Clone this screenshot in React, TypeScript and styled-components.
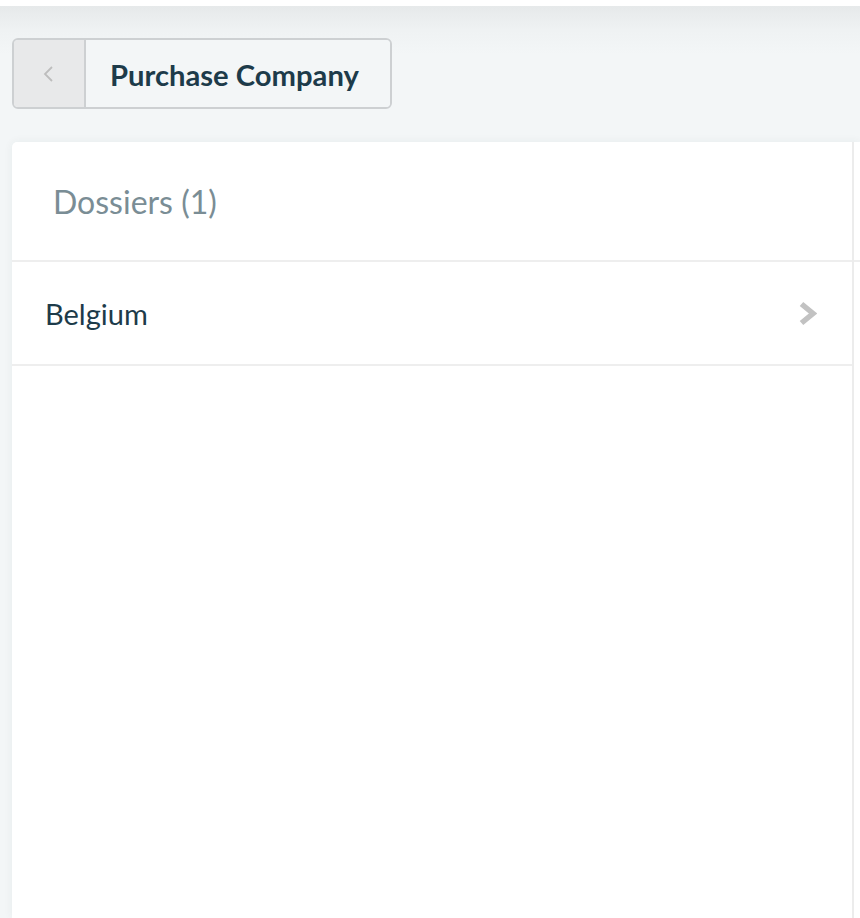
import React from "react";
import styled, { createGlobalStyle } from "styled-components";

const Global = createGlobalStyle`
  html, body { margin: 0; padding: 0; }
  body {
    background: #f3f6f7;
    font-family: "Source Sans Pro", Lato, "Noto Sans", sans-serif;
    -webkit-font-smoothing: antialiased;
  }
`;

const TopStrip = styled.div`
  height: 6px;
  background: #ffffff;
`;

const Page = styled.div`
  min-height: 912px;
  box-sizing: border-box;
  padding: 32px 0 0 12px;
  background: linear-gradient(#e6e9ea 0px, #eff2f3 24px, #f3f6f7 48px, #f3f6f7 100%);
  display: flex;
  flex-direction: column;
  overflow: hidden;
`;

const Toolbar = styled.div`
  display: flex;
`;

const BackGroup = styled.div`
  display: flex;
  height: 71px;
  box-sizing: border-box;
  border: 2px solid #cdd0d2;
  border-radius: 6px;
  overflow: hidden;
`;

const BackButton = styled.button`
  width: 72px;
  border: none;
  border-right: 2px solid #cdd0d2;
  background: #e8e9ea;
  display: flex;
  align-items: center;
  justify-content: center;
  padding: 0;
  cursor: pointer;
`;

const Title = styled.div`
  display: flex;
  align-items: center;
  padding: 2px 31px 0 24px;
  font-size: 29.2px;
  font-weight: 700;
  color: #1d3b4a;
  background: #f3f6f7;
`;

const Card = styled.div`
  margin-top: 33px;
  flex: 1;
  display: flex;
  background: #ffffff;
  border-top-left-radius: 5px;
  box-shadow: 0 0 10px rgba(40, 60, 70, 0.06);
  min-height: 776px;
`;

const MainPanel = styled.div`
  width: 842px;
  box-sizing: border-box;
  flex-shrink: 0;
  border-right: 2px solid #ececec;
  display: flex;
  flex-direction: column;
`;

const SidePanel = styled.div`
  flex: 1;
`;

const PanelHeader = styled.div`
  height: 120px;
  box-sizing: border-box;
  border-bottom: 2px solid #eeeeee;
  display: flex;
  align-items: center;
  padding-left: 41px;
  padding-top: 1px;
`;

const HeaderTitle = styled.h2`
  margin: 0;
  font-size: 32px;
  font-weight: 400;
  color: #7a8d95;
`;

const Row = styled.div`
  height: 104px;
  box-sizing: border-box;
  border-bottom: 2px solid #eeeeee;
  display: flex;
  align-items: center;
  justify-content: space-between;
  padding: 0 35px 0 33px;
  cursor: pointer;
`;

const RowLabel = styled.span`
  font-size: 29px;
  color: #1d3b4a;
`;

const SmallChevronLeft = () => (
  <svg width="12" height="16" viewBox="0 0 12 16" fill="none">
    <polyline points="9,1 2,8 9,15" stroke="#bdbdbd" strokeWidth="1.8" />
  </svg>
);

const HeavyChevronRight = () => (
  <svg width="18" height="25" viewBox="0 0 18 25" fill="none">
    <polyline points="2.5,3 14,12.5 2.5,22" stroke="#c2c2c2" strokeWidth="5.5" />
  </svg>
);

export default function App() {
  return (
    <>
      <Global />
      <TopStrip />
      <Page>
        <Toolbar>
          <BackGroup>
            <BackButton aria-label="Back">
              <SmallChevronLeft />
            </BackButton>
            <Title>Purchase Company</Title>
          </BackGroup>
        </Toolbar>
        <Card>
          <MainPanel>
            <PanelHeader>
              <HeaderTitle>Dossiers (1)</HeaderTitle>
            </PanelHeader>
            <Row>
              <RowLabel>Belgium</RowLabel>
              <HeavyChevronRight />
            </Row>
          </MainPanel>
          <SidePanel>
            <PanelHeader />
          </SidePanel>
        </Card>
      </Page>
    </>
  );
}
